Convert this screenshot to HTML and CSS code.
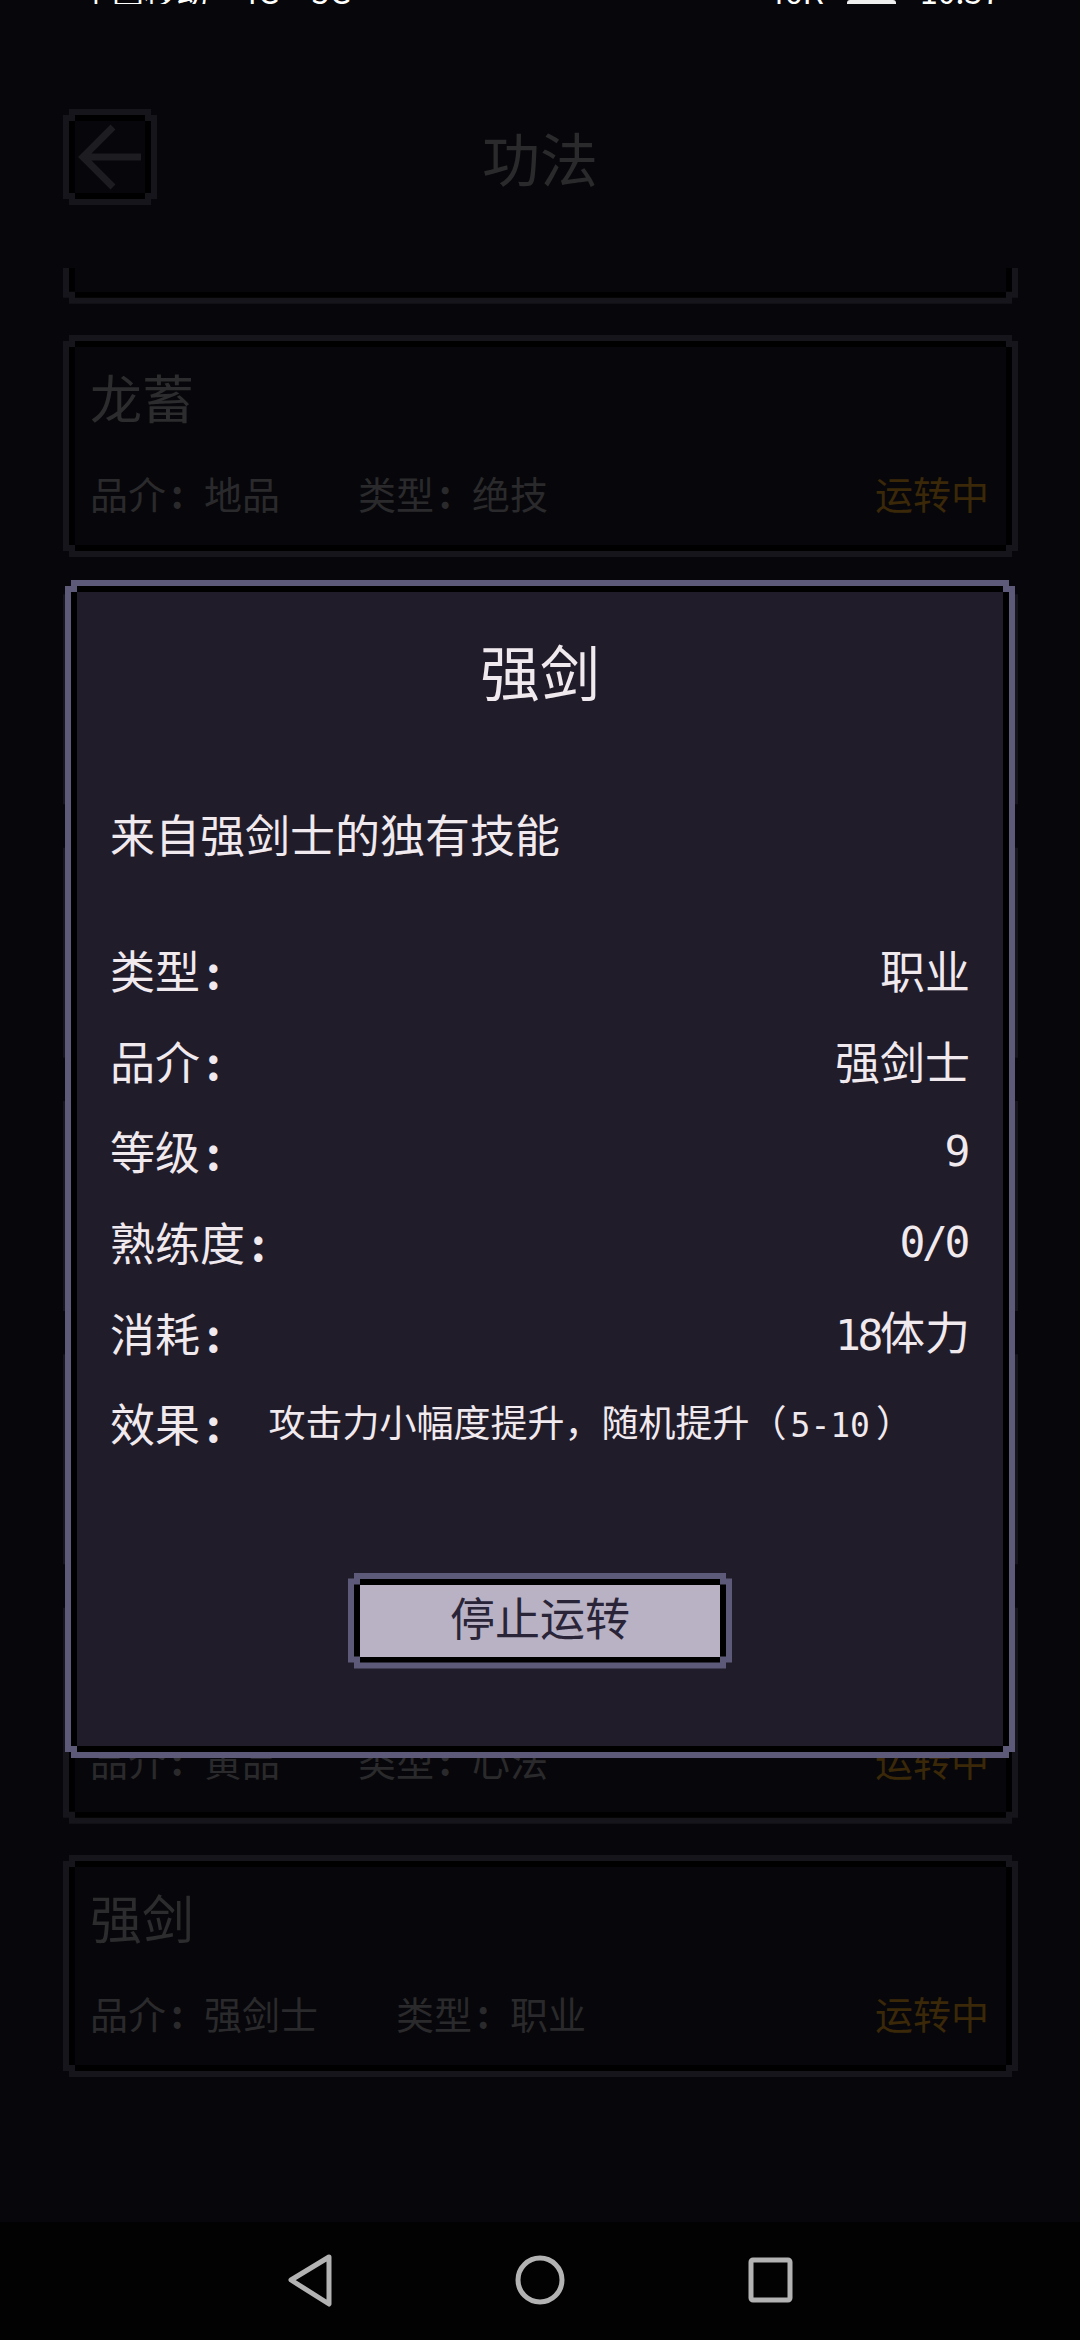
FILE: index.html
```html
<!DOCTYPE html>
<html lang="zh-CN">
<head>
    <meta charset="UTF-8">
    <meta name="viewport" content="width=device-width, initial-scale=1.0">
    <title>功法</title>
    <link rel="stylesheet" href="styles.css">
</head>
<body>
    <div class="screen">
        <!-- Status bar, cut off by the top of the screen -->
        <div class="status-bar">
            <div class="status-left">
                <span>中国移动</span>
                <span>4G</span>
                <span>5G</span>
            </div>
            <div class="status-right">
                <span>46K</span>
                <span class="battery"></span>
                <span>10:37</span>
            </div>
        </div>

        <!-- Header -->
        <div class="header">
            <button class="back-btn frame">
                <span class="frame-mid">
                    <span class="frame-fill">
                        <svg width="70" height="68" viewBox="0 0 70 68">
                            <path d="M38 4 L8 34 L38 64 M8 34 H66" fill="none" stroke="#1d1c21" stroke-width="7"/>
                        </svg>
                    </span>
                </span>
            </button>
            <div class="header-title">功法</div>
        </div>

        <!-- Skill list -->
        <div class="list">
            <div class="list-inner">
                <div class="card frame"><div class="frame-mid"><div class="frame-fill card-body">
                    <div class="card-name">吐纳</div>
                    <div class="card-meta">
                        <span>品介<span class="colon">:</span>凡品</span>
                        <span>类型<span class="colon">:</span>心法</span>
                        <span class="card-state">运转中</span>
                    </div>
                </div></div></div>

                <div class="card frame"><div class="frame-mid"><div class="frame-fill card-body">
                    <div class="card-name">龙蓄</div>
                    <div class="card-meta">
                        <span>品介<span class="colon">:</span>地品</span>
                        <span>类型<span class="colon">:</span>绝技</span>
                        <span class="card-state">运转中</span>
                    </div>
                </div></div></div>

                <div class="card frame"><div class="frame-mid"><div class="frame-fill card-body">
                    <div class="card-name">破甲</div>
                    <div class="card-meta">
                        <span>品介<span class="colon">:</span>玄品</span>
                        <span>类型<span class="colon">:</span>绝技</span>
                        <span class="card-state">运转中</span>
                    </div>
                </div></div></div>

                <div class="card frame"><div class="frame-mid"><div class="frame-fill card-body">
                    <div class="card-name">归元</div>
                    <div class="card-meta">
                        <span>品介<span class="colon">:</span>玄品</span>
                        <span>类型<span class="colon">:</span>心法</span>
                        <span class="card-state">运转中</span>
                    </div>
                </div></div></div>

                <div class="card frame"><div class="frame-mid"><div class="frame-fill card-body">
                    <div class="card-name">铁骨</div>
                    <div class="card-meta">
                        <span>品介<span class="colon">:</span>黄品</span>
                        <span>类型<span class="colon">:</span>绝技</span>
                        <span class="card-state">运转中</span>
                    </div>
                </div></div></div>

                <div class="card frame"><div class="frame-mid"><div class="frame-fill card-body">
                    <div class="card-name">疾风</div>
                    <div class="card-meta">
                        <span>品介<span class="colon">:</span>黄品</span>
                        <span>类型<span class="colon">:</span>绝技</span>
                        <span class="card-state">运转中</span>
                    </div>
                </div></div></div>

                <div class="card frame"><div class="frame-mid"><div class="frame-fill card-body">
                    <div class="card-name">静心</div>
                    <div class="card-meta">
                        <span>品介<span class="colon">:</span>黄品</span>
                        <span>类型<span class="colon">:</span>心法</span>
                        <span class="card-state">运转中</span>
                    </div>
                </div></div></div>

                <div class="card frame"><div class="frame-mid"><div class="frame-fill card-body">
                    <div class="card-name">强剑</div>
                    <div class="card-meta">
                        <span>品介<span class="colon">:</span>强剑士</span>
                        <span>类型<span class="colon">:</span>职业</span>
                        <span class="card-state">运转中</span>
                    </div>
                </div></div></div>
            </div>
        </div>

        <!-- Navigation bar -->
        <div class="nav-bar">
            <svg width="56" height="56" viewBox="0 0 56 56">
                <path d="M47 5 L9 28 L47 52 Z" fill="none" stroke="#b3b3b3" stroke-width="5" stroke-linejoin="round"/>
            </svg>
            <svg width="56" height="56" viewBox="0 0 56 56">
                <circle cx="28" cy="28" r="22" fill="none" stroke="#b3b3b3" stroke-width="5"/>
            </svg>
            <svg width="56" height="56" viewBox="0 0 56 56">
                <rect x="9" y="8" width="39" height="40" rx="2" fill="none" stroke="#b3b3b3" stroke-width="5"/>
            </svg>
        </div>

        <!-- Skill detail dialog -->
        <div class="dialog-layer">
            <div class="dialog frame">
                <div class="frame-mid">
                    <div class="frame-fill dialog-body">
                        <div class="dialog-title">强剑</div>
                        <div class="dialog-desc">来自强剑士的独有技能</div>
                        <div class="info-rows">
                            <div class="info-row"><span class="info-label">类型<span class="colon">:</span></span><span>职业</span></div>
                            <div class="info-row"><span class="info-label">品介<span class="colon">:</span></span><span>强剑士</span></div>
                            <div class="info-row"><span class="info-label">等级<span class="colon">:</span></span><span class="num">9</span></div>
                            <div class="info-row"><span class="info-label">熟练度<span class="colon">:</span></span><span class="num">0/0</span></div>
                            <div class="info-row"><span class="info-label">消耗<span class="colon">:</span></span><span><span class="num num-inline">18</span>体力</span></div>
                            <div class="info-row info-effect">
                                <span class="info-label">效果<span class="colon">:</span></span>
                                <span class="effect-text">攻击力小幅度提升，随机提升（<span class="num-small">5-10</span>）</span>
                            </div>
                        </div>
                        <button class="stop-btn frame">
                            <span class="frame-mid">
                                <span class="frame-fill stop-fill">停止运转</span>
                            </span>
                        </button>
                    </div>
                </div>
            </div>
        </div>
    </div>
</body>
</html>
```

FILE: styles.css
```css
/* General */
* {
    box-sizing: border-box;
}

body {
    margin: 0;
    background-color: #000;
    font-family: "Noto Sans CJK SC", "Liberation Sans", sans-serif;
}

.screen {
    position: relative;
    width: 1080px;
    height: 2340px;
    display: flex;
    flex-direction: column;
    overflow: hidden;
    background-color: #07060a;
}

/* Pixel style frame: outer line, black gap, then the fill. Corners are notched */
.frame,
.frame-mid {
    display: block;
    padding: 6px;
    clip-path: polygon(
        6px 0, calc(100% - 6px) 0, calc(100% - 6px) 6px, 100% 6px,
        100% calc(100% - 6px), calc(100% - 6px) calc(100% - 6px), calc(100% - 6px) 100%, 6px 100%,
        6px calc(100% - 6px), 0 calc(100% - 6px), 0 6px, 6px 6px
    );
}

.frame {
    background-color: #16151b;
}

.frame-mid {
    height: 100%;
    background-color: #000;
}

.frame-fill {
    display: block;
    height: 100%;
    background-color: #07060a;
}

/* Status bar */
.status-bar {
    height: 4px;
    flex-shrink: 0;
    display: flex;
    justify-content: space-between;
    align-items: flex-end;
    padding: 0 80px 0 80px;
    overflow: hidden;
    color: #fff;
    font-size: 32px;
    line-height: 1;
}

.status-left,
.status-right {
    display: flex;
    align-items: flex-end;
    gap: 32px;
    margin-bottom: -2px;
}

.status-right {
    gap: 24px;
}

.battery {
    width: 49px;
    height: 6px;
    border-radius: 3px;
    background-color: #eee;
}

/* Header */
.header {
    height: 264px;
    flex-shrink: 0;
    position: relative;
    padding: 105px 0 0 63px;
}

.back-btn {
    width: 94px;
    height: 96px;
    border: none;
    cursor: pointer;
}

.back-btn .frame-fill {
    display: flex;
    align-items: center;
    justify-content: center;
}

.header-title {
    position: absolute;
    left: 0;
    right: 0;
    top: 111px;
    text-align: center;
    font-size: 58px;
    line-height: 84px;
    color: #2a2a2c;
}

/* List */
.list {
    flex: 1;
    overflow: hidden;
    padding: 0 62px 0 63px;
}

.list-inner {
    display: flex;
    flex-direction: column;
    gap: 31.33px;
    margin-top: -186.33px;
}

.card {
    height: 222px;
    flex-shrink: 0;
}

.card-body {
    padding: 14px 17px 0 15px;
}

.card-name {
    font-size: 52px;
    line-height: 72px;
    color: #2c2c2e;
}

.card-meta {
    display: flex;
    gap: 78px;
    margin-top: 32px;
    font-size: 38px;
    line-height: 56px;
    color: #2a2a2c;
}

.card-state {
    margin-left: auto;
    color: #3a2809;
}

.colon {
    display: inline-block;
    width: 1em;
    padding-left: 5px;
    font-weight: 700;
}

/* Navigation bar */
.nav-bar {
    height: 118px;
    flex-shrink: 0;
    display: flex;
    justify-content: center;
    align-items: flex-start;
    gap: 174px;
    padding-top: 30px;
    background-color: #020203;
}

/* Dialog */
.dialog-layer {
    position: absolute;
    top: 0;
    left: 0;
    right: 0;
    bottom: 0;
    display: flex;
    justify-content: center;
    align-items: center;
    padding-bottom: 2px;
}

.dialog {
    width: 950px;
    height: 1178px;
    background-color: #5c5a78;
}

.dialog-body {
    display: flex;
    flex-direction: column;
    padding: 36px 33px 0;
    background-color: #211c2a;
    color: #f0e9ee;
}

.dialog-title {
    text-align: center;
    font-size: 60px;
    line-height: 84px;
}

.dialog-desc {
    margin-top: 90px;
    font-size: 45px;
    line-height: 64px;
}

.info-rows {
    display: flex;
    flex-direction: column;
    margin-top: 59px;
}

.info-row {
    height: 90.6px;
    display: flex;
    justify-content: space-between;
    align-items: center;
    font-size: 45px;
    line-height: 64px;
}

.info-label .colon {
    width: 0.5em;
    padding-left: 6px;
}

.num {
    margin-right: 3px;
    font-family: "DejaVu Sans Mono", monospace;
    font-size: 43px;
    letter-spacing: -3.4px;
}

.num-inline {
    margin-right: 0;
}

.info-effect {
    justify-content: flex-start;
    gap: 46px;
}

.effect-text {
    font-size: 37px;
}

.num-small {
    margin: 0 6px 0 4px;
    font-family: "DejaVu Sans Mono", monospace;
    font-size: 33px;
}

.stop-btn {
    width: 384px;
    height: 96px;
    margin: 104px auto 0;
    border: none;
    background-color: #5c5a78;
    cursor: pointer;
}

.stop-fill {
    background-color: #b8b2c4;
    color: #2a2438;
    font-family: inherit;
    font-size: 45px;
    line-height: 72px;
    text-align: center;
}
```
